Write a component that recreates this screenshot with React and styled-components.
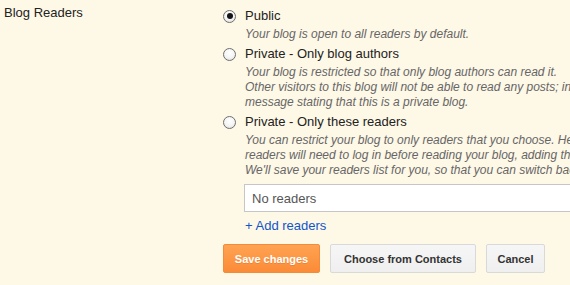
import React from "react";
import styled, { createGlobalStyle, css } from "styled-components";

const GlobalStyle = createGlobalStyle`
  html, body {
    margin: 0;
    padding: 0;
    background: #fef8e6;
    overflow: hidden;
  }
  body {
    font-family: "Liberation Sans", Arial, sans-serif;
    color: #222;
  }
`;

const Page = styled.div`
  width: 570px;
  height: 285px;
  overflow: hidden;
  display: grid;
  grid-template-columns: 223px 1fr;
  padding-top: 4px;
  box-sizing: border-box;
`;

const SectionLabel = styled.div`
  padding-left: 4px;
  font-size: 13px;
  line-height: 18px;
  color: #222;
`;

const Options = styled.div`
  padding-top: 3px;
  display: flex;
  flex-direction: column;
  gap: 3px;
  min-width: 0;
`;

const Option = styled.div`
  display: flex;
  flex-direction: column;
`;

const RadioRow = styled.label`
  display: flex;
  align-items: center;
  gap: 9px;
  font-size: 13px;
  line-height: 18px;
  color: #222;
  white-space: nowrap;
`;

const Radio = styled.span`
  width: 13px;
  height: 13px;
  box-sizing: border-box;
  border-radius: 50%;
  border: 1px solid #6e6e6e;
  background: radial-gradient(circle at 50% 35%, #ffffff 0%, #f4f4f4 55%, #d8d8d8 100%);
  display: flex;
  align-items: center;
  justify-content: center;
  flex: none;
  ${(p) =>
    p.$checked &&
    css`
      &::after {
        content: "";
        width: 6px;
        height: 6px;
        border-radius: 50%;
        background: #151515;
      }
    `}
`;

const Description = styled.div`
  margin-top: 2px;
  padding-left: 22px;
  font-size: 12px;
  line-height: 15px;
  font-style: italic;
  color: #666;
  white-space: nowrap;
`;

const ReadersBox = styled.div`
  margin: 6px 0 0 21px;
  width: 420px;
  height: 28px;
  box-sizing: border-box;
  border: 1px solid #c6c6c6;
  background: #fff;
  padding-left: 7px;
  display: flex;
  align-items: center;
  font-size: 13px;
  color: #555;
  flex: none;
`;

const AddLink = styled.a`
  margin: 5px 0 0 22px;
  font-size: 13px;
  line-height: 18px;
  color: #1155cc;
  text-decoration: none;
  cursor: pointer;
  align-self: flex-start;
`;

const Actions = styled.div`
  margin-top: 9px;
  display: flex;
  gap: 10px;
`;

const Button = styled.button`
  width: ${(p) => p.$width}px;
  height: 29px;
  padding: 0;
  box-sizing: border-box;
  border-radius: 2px;
  font-family: "Liberation Sans", Arial, sans-serif;
  font-size: 11px;
  font-weight: bold;
  cursor: pointer;
  ${(p) =>
    p.$primary
      ? css`
          color: #fff;
          border: 1px solid #f38b3b;
          background: linear-gradient(#ffa352, #fb8b37);
          text-shadow: 0 1px 0 rgba(200, 90, 20, 0.3);
        `
      : css`
          color: #333;
          border: 1px solid #d9d9d9;
          background: linear-gradient(#f6f6f6, #efefef);
        `}
`;

export default function App() {
  return (
    <>
      <GlobalStyle />
      <Page>
        <SectionLabel>Blog Readers</SectionLabel>
        <Options>
          <Option>
            <RadioRow>
              <Radio $checked />
              Public
            </RadioRow>
            <Description>Your blog is open to all readers by default.</Description>
          </Option>
          <Option>
            <RadioRow>
              <Radio />
              Private - Only blog authors
            </RadioRow>
            <Description>
              Your blog is restricted so that only blog authors can read it.
              <br />
              Other visitors to this blog will not be able to read any posts; instead, they will see a
              <br />
              message stating that this is a private blog.
            </Description>
          </Option>
          <Option>
            <RadioRow>
              <Radio />
              Private - Only these readers
            </RadioRow>
            <Description>
              You can restrict your blog to only readers that you choose. Here's how it works: Chosen
              <br />
              readers will need to log in before reading your blog, adding them to your list.
              <br />
              We'll save your readers list for you, so that you can switch back at any time.
            </Description>
            <ReadersBox>No readers</ReadersBox>
            <AddLink>+ Add readers</AddLink>
            <Actions>
              <Button $primary $width={97}>Save changes</Button>
              <Button $width={146}>Choose from Contacts</Button>
              <Button $width={59}>Cancel</Button>
            </Actions>
          </Option>
        </Options>
      </Page>
    </>
  );
}
